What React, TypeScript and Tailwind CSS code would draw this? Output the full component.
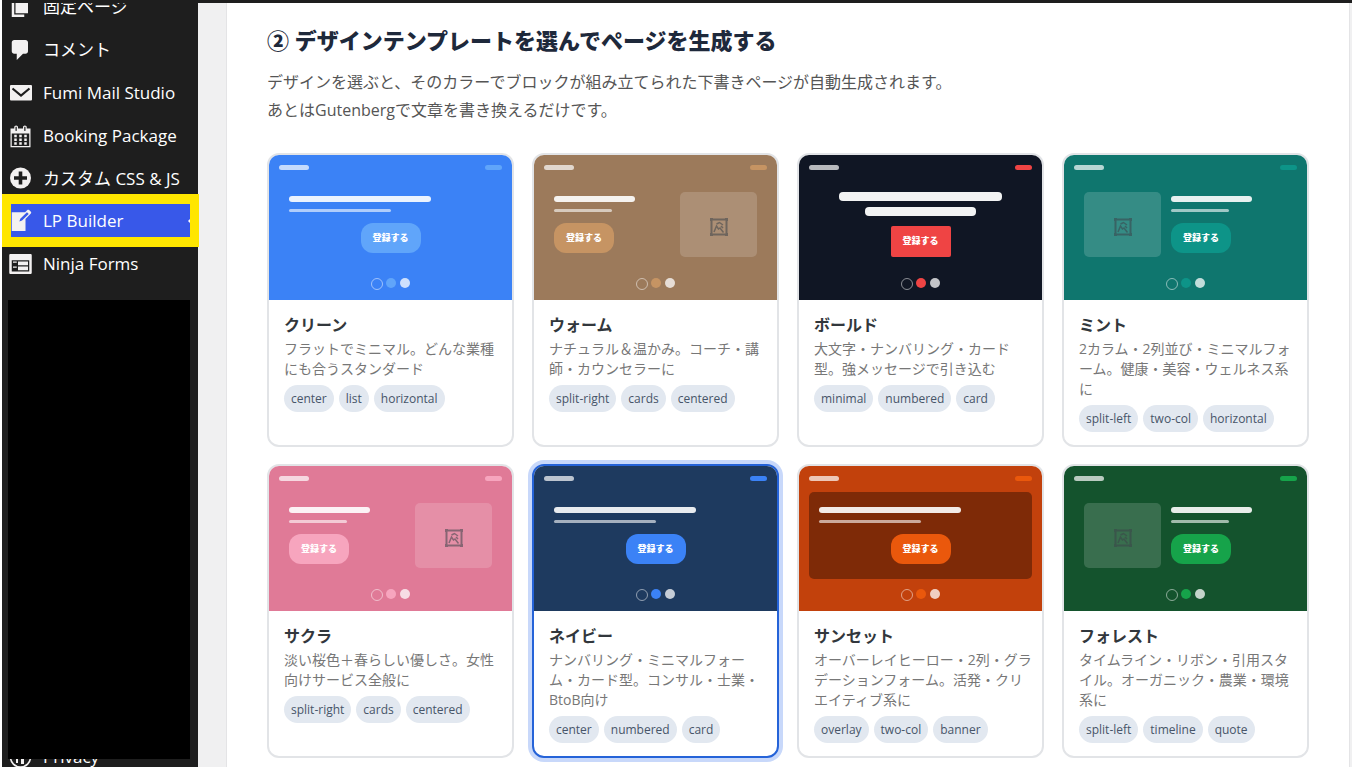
import { useState, type ReactNode } from 'react';
import clsx from 'clsx';

type Layout = 'center' | 'split-right' | 'split-left' | 'minimal' | 'overlay';

interface Template {
  id: string;
  name: string;
  description: string;
  tags: string[];
  layout: Layout;
  bg: string;
  accent: string;
}

const TEMPLATES: Template[] = [
  {
    id: 'clean',
    name: 'クリーン',
    description: 'フラットでミニマル。どんな業種にも合うスタンダード',
    tags: ['center', 'list', 'horizontal'],
    layout: 'center',
    bg: 'bg-[#3b82f6]',
    accent: 'bg-[#60a5fa]'
  },
  {
    id: 'warm',
    name: 'ウォーム',
    description: 'ナチュラル＆温かみ。コーチ・講師・カウンセラーに',
    tags: ['split-right', 'cards', 'centered'],
    layout: 'split-right',
    bg: 'bg-[#9c7a5b]',
    accent: 'bg-[#c69463]'
  },
  {
    id: 'bold',
    name: 'ボールド',
    description: '大文字・ナンバリング・カード型。強メッセージで引き込む',
    tags: ['minimal', 'numbered', 'card'],
    layout: 'minimal',
    bg: 'bg-[#101624]',
    accent: 'bg-[#ef4444]'
  },
  {
    id: 'mint',
    name: 'ミント',
    description: '2カラム・2列並び・ミニマルフォーム。健康・美容・ウェルネス系に',
    tags: ['split-left', 'two-col', 'horizontal'],
    layout: 'split-left',
    bg: 'bg-[#0f766e]',
    accent: 'bg-[#0d9488]'
  },
  {
    id: 'sakura',
    name: 'サクラ',
    description: '淡い桜色＋春らしい優しさ。女性向けサービス全般に',
    tags: ['split-right', 'cards', 'centered'],
    layout: 'split-right',
    bg: 'bg-[#e07a97]',
    accent: 'bg-[#f7a5be]'
  },
  {
    id: 'navy',
    name: 'ネイビー',
    description: 'ナンバリング・ミニマルフォーム・カード型。コンサル・士業・BtoB向け',
    tags: ['center', 'numbered', 'card'],
    layout: 'center',
    bg: 'bg-[#1e3a5f]',
    accent: 'bg-[#3b82f6]'
  },
  {
    id: 'sunset',
    name: 'サンセット',
    description: 'オーバーレイヒーロー・2列・グラデーションフォーム。活発・クリエイティブ系に',
    tags: ['overlay', 'two-col', 'banner'],
    layout: 'overlay',
    bg: 'bg-[#c2410c]',
    accent: 'bg-[#ea580c]'
  },
  {
    id: 'forest',
    name: 'フォレスト',
    description: 'タイムライン・リボン・引用スタイル。オーガニック・農業・環境系に',
    tags: ['split-left', 'timeline', 'quote'],
    layout: 'split-left',
    bg: 'bg-[#14532d]',
    accent: 'bg-[#16a34a]'
  }
];

const MenuIcon = ({ children }: { children: ReactNode }) => (
  <svg viewBox="0 0 24 24" className="size-6 shrink-0 overflow-visible" fill="#f3f1f1" aria-hidden="true">
    {children}
  </svg>
);

// Glyphs drawn on a 20 unit grid
const GlyphIcon = ({ d }: { d: string }) => (
  <MenuIcon>
    <path transform="translate(-1 -.5) scale(1.25)" d={d} />
  </MenuIcon>
);

const PagesIcon = () => <GlyphIcon d="M6 15V2h10v13H6zm-1 1h8v2H3V5h2v11z" />;

const CommentIcon = () => (
  <GlyphIcon d="M5 2h9c1.1 0 2 .9 2 2v7c0 1.1-.9 2-2 2h-2l-5 5v-5H5c-1.1 0-2-.9-2-2V4c0-1.1.9-2 2-2z" />
);

const MailIcon = () => (
  <MenuIcon>
    <rect x="1" y="4" width="22" height="15.5" rx="1" />
    <path d="M3.500 7.500l8.500 7 8.500-7" fill="none" stroke="#1e1e1e" strokeWidth="2.200" />
  </MenuIcon>
);

const CalendarIcon = () => (
  <GlyphIcon d="M15 4h3v15H2V4h3V3c0-.41.15-.76.44-1.06.29-.29.65-.44 1.06-.44s.77.15 1.06.44c.29.3.44.65.44 1.06v1h4V3c0-.41.15-.76.44-1.06.29-.29.65-.44 1.06-.44s.77.15 1.06.44c.29.3.44.65.44 1.06v1zM6 3v2.500c0 .14.05.26.15.36.09.09.21.14.35.14s.26-.05.35-.14c.1-.1.15-.22.15-.36V3c0-.14-.05-.26-.15-.35-.09-.1-.21-.15-.35-.15s-.26.05-.35.15c-.1.09-.15.21-.15.35zm7 0v2.500c0 .14.05.26.14.36.1.09.22.14.36.14s.26-.05.36-.14c.09-.1.14-.22.14-.36V3c0-.14-.05-.26-.14-.35-.1-.1-.22-.15-.36-.15s-.26.05-.36.15c-.09.09-.14.21-.14.35zm4 15V8H3v10h14zM7 9v2H5V9h2zm2 0h2v2H9V9zm4 2V9h2v2h-2zm-6 1v2H5v-2h2zm2 0h2v2H9v-2zm4 2v-2h2v2h-2zm-6 1v2H5v-2h2zm4 2H9v-2h2v2zm4 0h-2v-2h2v2z" />
);

const PlusIcon = () => (
  <MenuIcon>
    <circle cx="11.500" cy="11" r="10.500" />
    <path d="M11.500 4.500v13M5 11h13" stroke="#1e1e1e" strokeWidth="3.600" />
  </MenuIcon>
);

const BuilderIcon = () => (
  <GlyphIcon d="M16.890 1.200l1.410 1.410c.39.39.39 1.020 0 1.410L14 8.330V18H3V3h10.670l1.800-1.800c.4-.39 1.030-.4 1.420 0zm-5.660 8.480l5.370-5.360-1.420-1.420-5.360 5.370-.71 2.120z" />
);

const FormsIcon = () => (
  <GlyphIcon d="M2 2h16c.55 0 1 .45 1 1v14c0 .55-.45 1-1 1H2c-.55 0-1-.45-1-1V3c0-.55.45-1 1-1zm15 14V7H3v9h14zM4 8v1h3V8H4zm4 0v3h8V8H8zm-4 4v1h3v-1H4zm4 0v3h8v-3H8z" />
);

const PrivacyIcon = () => (
  <MenuIcon>
    <circle cx="11.500" cy="12" r="10" fill="none" stroke="#f3f1f1" strokeWidth="1.600" />
    <path d="M7 9h2v9H7zM12 11h3v8h-3z" />
  </MenuIcon>
);

interface MenuItem {
  label: string;
  icon: ReactNode;
  current?: boolean;
}

const MENU: MenuItem[] = [
  { label: '固定ページ', icon: <PagesIcon /> },
  { label: 'コメント', icon: <CommentIcon /> },
  { label: 'Fumi Mail Studio', icon: <MailIcon /> },
  { label: 'Booking Package', icon: <CalendarIcon /> },
  { label: 'カスタム CSS & JS', icon: <PlusIcon /> },
  { label: 'LP Builder', icon: <BuilderIcon />, current: true },
  { label: 'Ninja Forms', icon: <FormsIcon /> }
];

const MenuLink = ({ label, icon, current }: MenuItem) => (
  <a
    href="#"
    aria-current={current ? 'page' : undefined}
    className={clsx(
      'flex items-center gap-2.5 text-[17px] whitespace-nowrap text-white',
      current
        ? '-mt-1.5 -mr-px -mb-[5px] h-[53px] border-x-9 border-y-10 border-[#ffe600] bg-[#3858e9]'
        : 'h-[43px] pl-[7px]'
    )}
  >
    {current ? <span className="-ml-0.5 flex">{icon}</span> : icon}
    {label}
    {current && (
      <svg viewBox="0 0 2 4" className="ml-auto h-1 w-0.5" fill="#fff" aria-hidden="true">
        <path d="M2 0v4L0 2z" />
      </svg>
    )}
  </a>
);

const Sidebar = () => (
  <nav className="relative z-10 flex h-screen w-[196px] shrink-0 flex-col bg-[#1e1e1e]">
    <div className="-mt-[15px]">
      {MENU.map((item) => (
        <MenuLink key={item.label} {...item} />
      ))}
    </div>
    <div className="mt-[15px] mr-2 ml-1.5 flex-1 bg-black" />
    <div className="h-2 shrink-0 overflow-hidden">
      <div className="-mt-6">
        <MenuLink label="Privacy" icon={<PrivacyIcon />} />
      </div>
    </div>
  </nav>
);

const PictureBox = () => (
  <div className="flex h-[65px] w-[77px] shrink-0 items-center justify-center rounded-[5px] bg-white/16">
    <svg viewBox="0 0 20 20" className="mt-1 size-5 opacity-55" fill="none" stroke="#3c434a" aria-hidden="true">
      <rect x="2.500" y="2.500" width="15" height="15" strokeWidth="2" />
      <path d="M1 1.500h3M16 1.500h3M1 18.500h3M16 18.500h3M1.500 1v3M18.500 1v3M1.500 16v3M18.500 16v3" strokeWidth="1" />
      <path d="M5 15l2.500-6 2 3 1.500-1 3.500 4.500M7.500 7l3-1.500 3.500 2.500M12 9l2 2" strokeWidth="1.500" />
    </svg>
  </div>
);

const CtaPill = ({ accent, className }: { accent: string; className?: string }) => (
  <span
    className={clsx(
      'flex w-[60px] items-center justify-center pb-0.5 text-[9px] leading-none font-black text-white',
      accent,
      className
    )}
  >
    登録する
  </span>
);

const Hero = ({ layout, accent }: { layout: Layout; accent: string }) => {
  if (layout === 'minimal') {
    return (
      <div className="flex flex-1 flex-col items-center">
        <div className="h-[9px] w-4/5 rounded bg-white/95" />
        <div className="mt-1.5 h-[9px] w-[55%] rounded bg-white/95" />
        <CtaPill accent={accent} className="mt-2.5 h-[31px] rounded-xs" />
      </div>
    );
  }

  const centered = layout === 'center' || layout === 'overlay';
  return (
    <>
      {layout === 'split-left' && <PictureBox />}
      <div className="flex flex-1 flex-col">
        <div className="h-1.5 w-7/10 rounded-full bg-white/90" />
        <div className="mt-[7px] h-[3px] w-1/2 rounded-full bg-white/60" />
        <CtaPill accent={accent} className={clsx('mt-[11px] h-[30px] rounded-xl', centered && 'self-center')} />
      </div>
      {layout === 'split-right' && <PictureBox />}
    </>
  );
};

const Preview = ({ layout, bg, accent }: Pick<Template, 'layout' | 'bg' | 'accent'>) => (
  <div className={clsx('h-[145px] rounded-t-[10px]', bg)}>
    <div className="flex h-[26px] justify-between px-2.5 pt-2.5">
      <div className="h-[5px] w-[30px] rounded-full bg-white/70" />
      <div className={clsx('h-[5px] w-[17px] rounded-full', accent)} />
    </div>
    <div
      className={clsx(
        'mx-2.5 flex h-[87px] items-center gap-2.5 rounded-[5px] px-2.5',
        layout === 'overlay' && 'bg-black/35'
      )}
    >
      <Hero layout={layout} accent={accent} />
    </div>
    <div className="flex justify-center gap-[3px] pt-2.5">
      <div className="size-3 rounded-full border border-white/50" />
      <div className={clsx('size-2.5 rounded-full', accent)} />
      <div className="ml-px size-2.5 rounded-full bg-white/75" />
    </div>
  </div>
);

interface TemplateCardProps {
  template: Template;
  selected: boolean;
  onSelect: (id: string) => void;
}

const TemplateCard = ({ template, selected, onSelect }: TemplateCardProps) => (
  <label
    className={clsx(
      'relative block cursor-pointer rounded-xl border-2 bg-white',
      selected ? 'border-[#2563d8] ring-4 ring-[#2563eb]/25' : 'border-[#e2e4e7]'
    )}
  >
    <input
      type="radio"
      name="template"
      value={template.id}
      checked={selected}
      onChange={() => onSelect(template.id)}
      className="sr-only"
    />
    <Preview layout={template.layout} bg={template.bg} accent={template.accent} />
    <div className="pt-[15px] pr-2 pb-[13px] pl-[15px]">
      <h3 className="text-base leading-5 font-bold text-[#32373c]">{template.name}</h3>
      <p className="mt-1 text-sm leading-5 text-[#777]">{template.description}</p>
      <ul className="mt-1.5 flex gap-[5px]">
        {template.tags.map((tag) => (
          <li
            key={tag}
            className="flex h-[27px] items-center rounded-full bg-[#e2e8f0] px-[7px] text-xs whitespace-nowrap text-[#475569]"
          >
            {tag}
          </li>
        ))}
      </ul>
    </div>
  </label>
);

export default function App() {
  const [selectedId, setSelectedId] = useState('navy');

  return (
    <div
      lang="ja"
      className="relative flex h-screen overflow-hidden border-l-2 border-white bg-[#f0f0f1] font-['Open_Sans','Noto_Sans_CJK_JP',sans-serif]"
    >
      <div className="absolute inset-x-0 top-0 z-20 h-[3px] bg-[#1e1e1e]" />
      <Sidebar />
      <main className="mt-[3px] mr-0.5 ml-7 flex-1 border-x border-[#e4e4e6] bg-white px-10 pt-[22px]">
        <h2 className="text-[22px] leading-[30px] font-extrabold text-[#1e293b]">
          ② デザインテンプレートを選んでページを生成する
        </h2>
        <p className="mt-[13px] text-base leading-7 text-[#555]">
          デザインを選ぶと、そのカラーでブロックが組み立てられた下書きページが自動生成されます。
          <br />
          あとはGutenbergで文章を書き換えるだけです。
        </p>
        <div className="mt-[29px] grid grid-cols-4 gap-x-[18px] gap-y-[17px]">
          {TEMPLATES.map((template) => (
            <TemplateCard
              key={template.id}
              template={template}
              selected={template.id === selectedId}
              onSelect={setSelectedId}
            />
          ))}
        </div>
      </main>
    </div>
  );
}
